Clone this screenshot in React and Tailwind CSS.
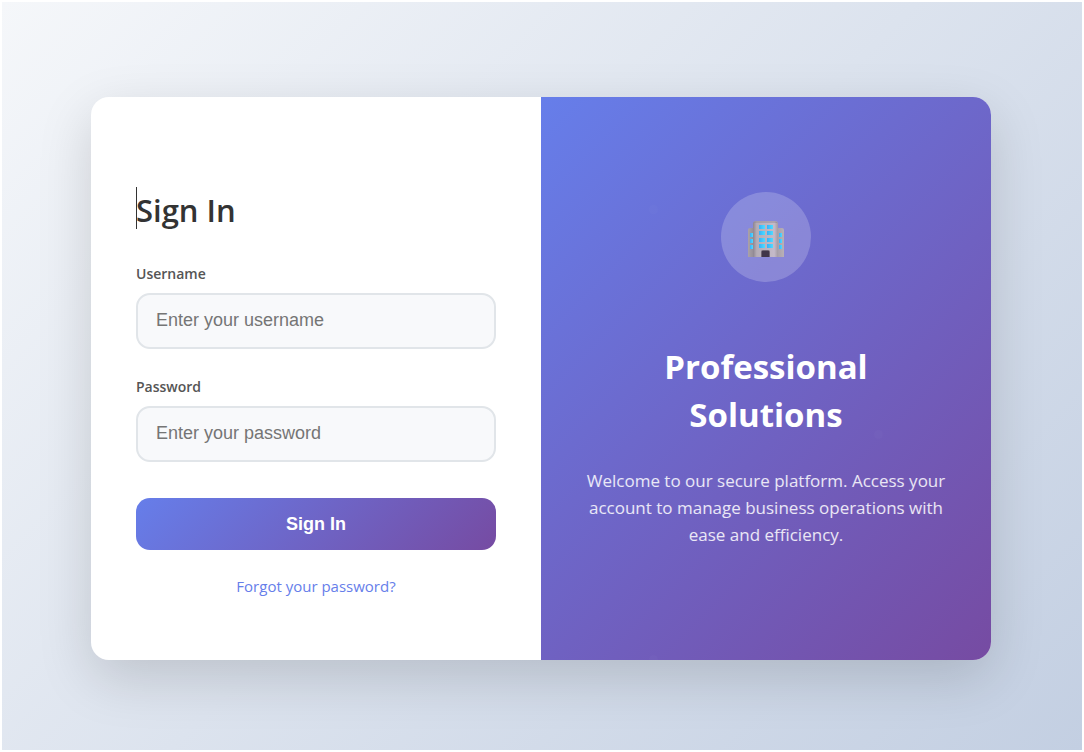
import { useState } from "react";

const fields = [
  { id: "username", label: "Username", type: "text", placeholder: "Enter your username" },
  { id: "password", label: "Password", type: "password", placeholder: "Enter your password" },
];

function Field({ id, label, type, placeholder, value, onChange }) {
  return (
    <div>
      <label htmlFor={id} className="mb-[9px] block text-sm font-semibold text-[#555]">
        {label}
      </label>
      <input
        id={id}
        name={id}
        type={type}
        placeholder={placeholder}
        value={value}
        onChange={onChange}
        className="block h-14 w-full rounded-[14px] border-2 border-[#e1e5e9] bg-[#f8f9fb] px-[18px] font-['Liberation_Sans',sans-serif] text-lg text-[#333] outline-none placeholder:text-[#757575] focus:border-[#667eea]"
      />
    </div>
  );
}

function OfficeIcon() {
  return (
    <svg viewBox="0 0 36 36" className="size-9" aria-hidden="true">
      <defs>
        <linearGradient id="tower" x1="0" x2="1">
          <stop offset="0" stopColor="#8d8590" />
          <stop offset="0.15" stopColor="#b5adb6" />
          <stop offset="0.85" stopColor="#c4bac9" />
          <stop offset="1" stopColor="#a39ba3" />
        </linearGradient>
        <linearGradient id="wing" x1="0" x2="1">
          <stop offset="0" stopColor="#aaa2a8" />
          <stop offset="0.2" stopColor="#8f8792" />
          <stop offset="0.8" stopColor="#a69eaa" />
          <stop offset="1" stopColor="#b9b1b6" />
        </linearGradient>
        <linearGradient id="glass" x1="0" x2="1">
          <stop offset="0" stopColor="#36b0fb" />
          <stop offset="1" stopColor="#4fdcff" />
        </linearGradient>
      </defs>
      <path d="M0 36V9Q0 7 2 7H34Q36 7 36 9V36Z" fill="url(#wing)" />
      <path d="M5 36V3Q5 0 8 0H27Q30 0 30 3V36Z" fill="url(#tower)" />
      <path d="M6 2Q6 1 8 1H27Q29 1 29 2" fill="none" stroke="#958d96" />
      <g fill="url(#glass)">
        {[4, 10, 17, 23].map((y) => (
          <g key={y}>
            <rect x="11" y={y} width="6" height="4" />
            <rect x="19" y={y} width="6" height="4" />
          </g>
        ))}
        {[12, 18, 24].map((y) => (
          <g key={y}>
            <rect x="2" y={y} width="3" height="4" />
            <rect x="31" y={y} width="3" height="4" />
          </g>
        ))}
      </g>
      <path d="M13 36V31Q13 29 15 29H20Q22 29 22 31V36Z" fill="#6d6472" />
      <path d="M14 36V30H21V36Z" fill="#40364a" />
    </svg>
  );
}

// faint dots, repeated in square tiles as wide as the panel
function DotPattern() {
  return (
    <svg className="absolute inset-0 size-full" viewBox="0 0 100 100" preserveAspectRatio="xMidYMin meet" aria-hidden="true">
      <g fill="#fff" fillOpacity="0.02">
        <circle cx="25" cy="25" r="1" />
        <circle cx="75" cy="75" r="1" />
        <circle cx="25" cy="125" r="1" />
      </g>
    </svg>
  );
}

export default function App() {
  const [form, setForm] = useState({ username: "", password: "" });

  function update(field) {
    return (e) => setForm((f) => ({ ...f, [field]: e.target.value }));
  }

  return (
    <div className="flex min-h-screen bg-white p-[2px] font-['Open_Sans','Noto_Sans',sans-serif]">
      <div className="flex flex-1 items-center justify-center bg-linear-[135deg,#f5f7fa_0%,#c3cfe2_100%] pt-6 pr-[22px] pb-5 pl-5">
        <main className="grid min-h-[563px] w-full max-w-[900px] grid-cols-2 overflow-hidden rounded-[18px] bg-white shadow-[0_18px_54px_rgba(0,0,0,0.15)]">
          <section className="flex flex-col justify-center px-[45px] pt-7">
            <h1 className="mb-[31px] flex items-start text-[31px] leading-[46px] font-semibold text-[#333]">
              <span className="-mr-px h-[42px] w-px bg-[#333]" />
              Sign In
            </h1>
            <form onSubmit={(e) => e.preventDefault()} className="flex flex-col gap-7">
              {fields.map((f) => (
                <Field key={f.id} {...f} value={form[f.id]} onChange={update(f.id)} />
              ))}
              <button
                type="submit"
                className="mt-2 h-[52px] w-full cursor-pointer rounded-[14px] bg-linear-[135deg,#667eea_0%,#764ba2_100%] font-['Liberation_Sans',sans-serif] text-lg font-bold text-white"
              >
                Sign In
              </button>
            </form>
            <div className="mt-6 text-center text-[15px] leading-6">
              <a href="#forgot" className="text-[#667eea]">
                Forgot your password?
              </a>
            </div>
          </section>

          <section className="relative flex flex-col items-center justify-center bg-linear-[135deg,#667eea_0%,#764ba2_100%] px-10 pb-4 text-center text-white">
            <DotPattern />
            <div className="mb-[61px] flex size-[90px] items-center justify-center rounded-full bg-white/20 pt-1">
              <OfficeIcon />
            </div>
            <h2 className="mb-7 max-w-[240px] text-[33px] leading-12 font-bold">Professional Solutions</h2>
            <p className="text-[17px] leading-[27px] text-white/85">
              Welcome to our secure platform. Access your account to manage business operations with ease and efficiency.
            </p>
          </section>
        </main>
      </div>
    </div>
  );
}
